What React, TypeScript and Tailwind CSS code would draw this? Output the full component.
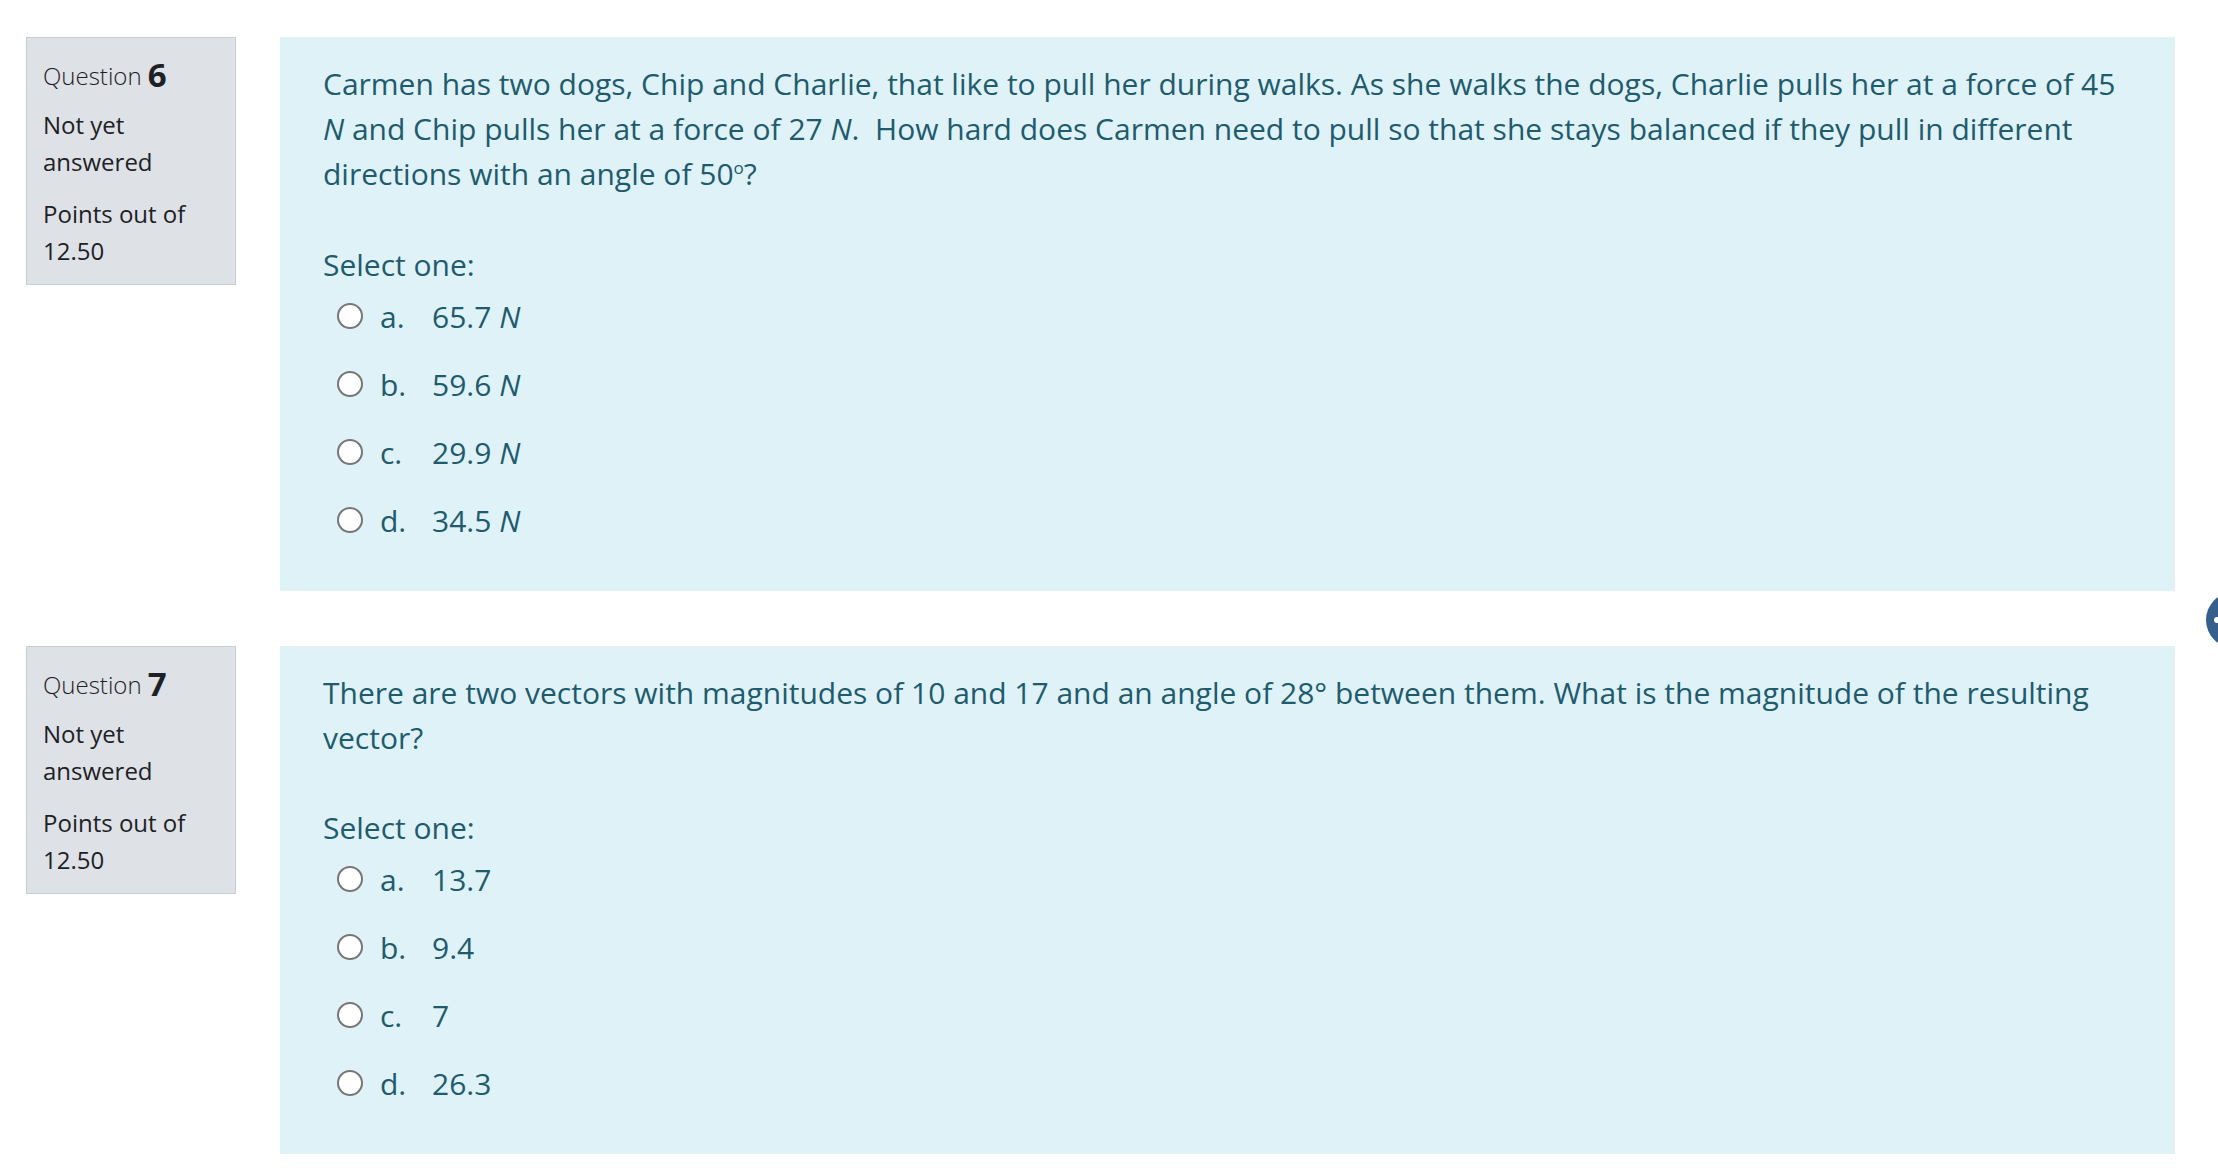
import React from "react";

type Option = { letter: string; value: string; unit?: boolean };

const InfoBox = ({ num }: { num: number }) => (
  <div className="w-[210px] shrink-0 self-start border border-[#c8cdd3] bg-[#dee2e6] pl-4 pr-3 pt-[17px] pb-[15px] text-[24px] leading-[37px] text-[#1d2125]">
    <div className="mb-[11px] flex h-[40px] items-center">
      <span className="font-light">Question&nbsp;</span>
      <span className="font-bold text-[33px] leading-[40px]">{num}</span>
    </div>
    <div className="mb-[15px]">Not yet answered</div>
    <div>Points out of 12.50</div>
  </div>
);

const Radio = () => (
  <span className="ml-[14px] mr-[17px] inline-block h-[26px] w-[26px] shrink-0 rounded-full border-2 border-[#767676] bg-white" />
);

const Options = ({ options }: { options: Option[] }) => (
  <div>
    {options.map((o) => (
      <div key={o.letter} className="flex h-[68px] items-center">
        <Radio />
        <span className="w-[52px]">{o.letter}</span>
        <span>
          {o.value}
          {o.unit && <i> N</i>}
        </span>
      </div>
    ))}
  </div>
);

const Question = ({
  num,
  text,
  options,
  loose,
}: {
  num: number;
  text: React.ReactNode;
  options: Option[];
  loose?: boolean;
}) => (
  <div className="flex gap-[44px]">
    <InfoBox num={num} />
    <div className="flex-1 bg-[#def2f8] pl-[43px] pr-[40px] pt-6 pb-[37px] text-[30px] leading-[45px] text-[#1f5b6d]">
      <p>{text}</p>
      <div className={loose ? "mt-[51px] leading-[34px]" : "mt-[47px] leading-[34px]"}>Select one:</div>
      <Options options={options} />
    </div>
  </div>
);

export default function App() {
  return (
    <div
      className="relative min-h-[1176px] overflow-hidden bg-white pl-[26px] pr-[43px] pt-[37px]"
      style={{ fontFamily: '"Open Sans", "Noto Sans", sans-serif' }}
    >
      <div className="flex flex-col gap-[55px]">
        <Question
          num={6}
          text={
            <>
              Carmen has two dogs, Chip and Charlie, that like to pull her during walks. As she walks
              the dogs, Charlie pulls her at a force of 45 <i>N</i> and Chip pulls her at a force of 27{" "}
              <i>N</i>.&nbsp; How hard does Carmen need to pull so that she stays balanced if they pull in
              different directions with an angle of 50
              <span className="relative -top-[11px] text-[17px]">o</span>?
            </>
          }
          options={[
            { letter: "a.", value: "65.7", unit: true },
            { letter: "b.", value: "59.6", unit: true },
            { letter: "c.", value: "29.9", unit: true },
            { letter: "d.", value: "34.5", unit: true },
          ]}
        />
        <Question
          num={7}
          loose
          text="There are two vectors with magnitudes of 10 and 17 and an angle of 28° between them. What is the magnitude of the resulting vector?"
          options={[
            { letter: "a.", value: "13.7" },
            { letter: "b.", value: "9.4" },
            { letter: "c.", value: "7" },
            { letter: "d.", value: "26.3" },
          ]}
        />
      </div>
      {/* drawer toggle at the right edge */}
      <div className="absolute left-[2206px] top-[592px] flex h-[56px] w-[56px] items-center rounded-full bg-[#36608c] pl-[8px]">
        <span className="h-[6px] w-[6px] rounded-full bg-white" />
      </div>
    </div>
  );
}
